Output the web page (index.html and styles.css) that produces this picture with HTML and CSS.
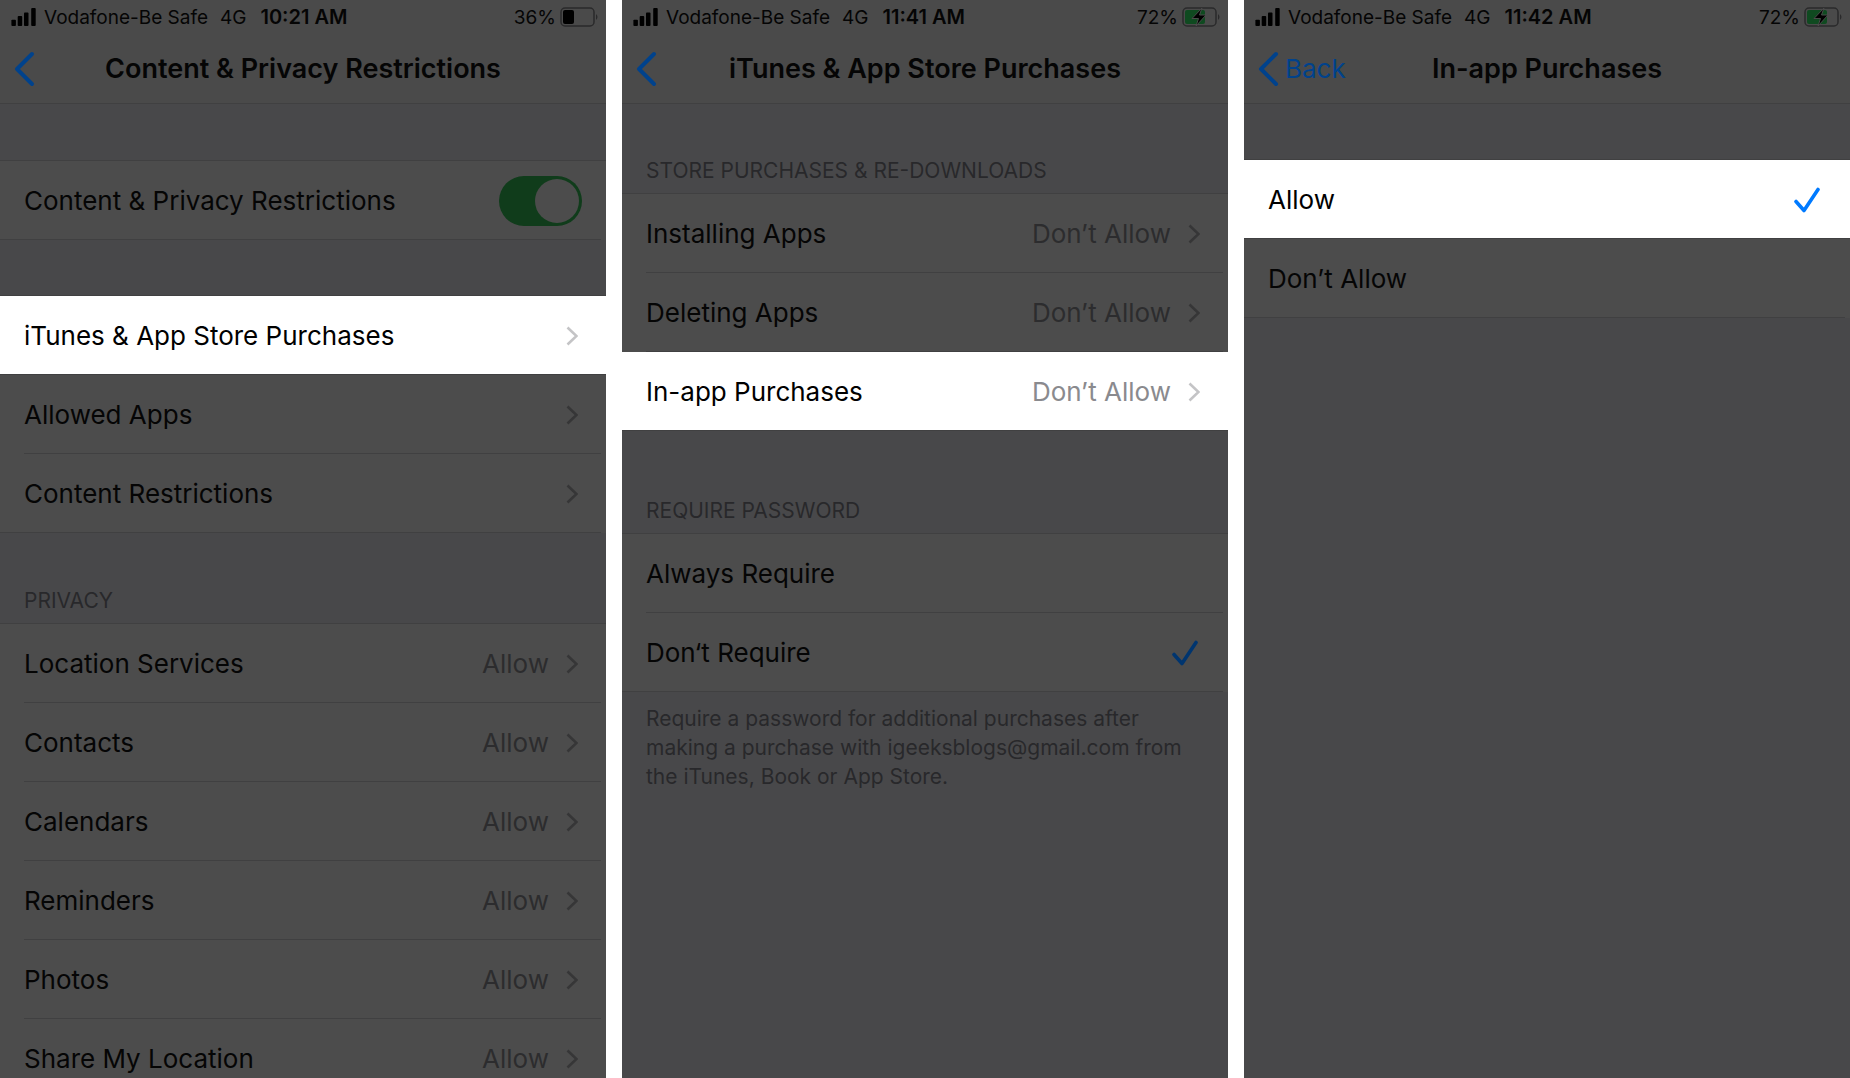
FILE: index.html
```html
<!DOCTYPE html>
<html lang="en">
<head>
<meta charset="utf-8">
<title>Content &amp; Privacy Restrictions</title>
<link rel="stylesheet" href="styles.css">
</head>
<body>
<svg class="defs" aria-hidden="true">
  <symbol id="signal" viewBox="0 0 28 20"><rect x="0" y="13" width="5" height="7" rx="1"/><rect x="7" y="9" width="5" height="11" rx="1"/><rect x="14" y="5" width="5" height="15" rx="1"/><rect x="22" y="0" width="5" height="20" rx="1"/></symbol>
  <symbol id="back" viewBox="0 0 22 36"><path d="M19 3 4 18l15 15" fill="none" stroke="currentColor" stroke-width="4" stroke-linecap="round" stroke-linejoin="round"/></symbol>
  <symbol id="chevron" viewBox="0 0 12 20"><path d="M1.500 1.500 10.500 10l-9 8.500" fill="none" stroke="currentColor" stroke-width="2.600"/></symbol>
  <symbol id="check" viewBox="0 0 26 26"><path d="M2 14.500 10 23.500 24 2.500" fill="none" stroke="currentColor" stroke-width="3.600" stroke-linecap="round" stroke-linejoin="round"/></symbol>
  <symbol id="battery" viewBox="0 0 40 20"><rect x="1" y="1" width="33" height="18" rx="4" fill="none" stroke="#2a2a2b" stroke-width="1.500"/><path d="M36 7q3 3 0 6z" fill="#2a2a2b"/></symbol>
  <symbol id="charge" viewBox="0 0 40 20"><rect x="3" y="3" width="20" height="14" rx="2" fill="#0f4a20"/><path d="M20 1 10 11.500h6.500L14 19l10-11h-6.500z" fill="#000" stroke="#4a4a4a"/></symbol>
</svg>
<main class="screens">
  <section class="phone">
    <header class="top">
      <div class="status"><svg class="signal"><use href="#signal"/></svg><span>Vodafone-Be Safe</span><span class="net">4G</span><b>10:21 AM</b><span class="level">36%</span>
        <svg class="battery" viewBox="0 0 40 20"><use href="#battery"/><rect x="3" y="3" width="11" height="14" rx="2" fill="#000"/></svg></div>
      <nav class="nav"><a class="back" href="#" aria-label="Back"><svg><use href="#back"/></svg></a><h1>Content &amp; Privacy Restrictions</h1></nav>
    </header>
    <div class="group lead"><label class="row"><span>Content &amp; Privacy Restrictions</span><input class="switch" type="checkbox" checked></label></div>
    <div class="group spaced">
      <a class="row lit" href="#"><span>iTunes &amp; App Store Purchases</span><svg class="chevron"><use href="#chevron"/></svg></a>
      <a class="row" href="#"><span>Allowed Apps</span><svg class="chevron"><use href="#chevron"/></svg></a>
      <a class="row" href="#"><span>Content Restrictions</span><svg class="chevron"><use href="#chevron"/></svg></a>
    </div>
    <h2>Privacy</h2>
    <div class="group">
      <a class="row" href="#"><span>Location Services</span><span class="value">Allow</span><svg class="chevron"><use href="#chevron"/></svg></a>
      <a class="row" href="#"><span>Contacts</span><span class="value">Allow</span><svg class="chevron"><use href="#chevron"/></svg></a>
      <a class="row" href="#"><span>Calendars</span><span class="value">Allow</span><svg class="chevron"><use href="#chevron"/></svg></a>
      <a class="row" href="#"><span>Reminders</span><span class="value">Allow</span><svg class="chevron"><use href="#chevron"/></svg></a>
      <a class="row" href="#"><span>Photos</span><span class="value">Allow</span><svg class="chevron"><use href="#chevron"/></svg></a>
      <a class="row" href="#"><span>Share My Location</span><span class="value">Allow</span><svg class="chevron"><use href="#chevron"/></svg></a>
    </div>
  </section>

  <section class="phone">
    <header class="top">
      <div class="status"><svg class="signal"><use href="#signal"/></svg><span>Vodafone-Be Safe</span><span class="net">4G</span><b>11:41 AM</b><span class="level">72%</span>
        <svg class="battery" viewBox="0 0 40 20"><use href="#battery"/><use href="#charge"/></svg></div>
      <nav class="nav"><a class="back" href="#" aria-label="Back"><svg><use href="#back"/></svg></a><h1>iTunes &amp; App Store Purchases</h1></nav>
    </header>
    <h2>Store Purchases &amp; Re-downloads</h2>
    <div class="group">
      <a class="row" href="#"><span>Installing Apps</span><span class="value">Don’t Allow</span><svg class="chevron"><use href="#chevron"/></svg></a>
      <a class="row" href="#"><span>Deleting Apps</span><span class="value">Don’t Allow</span><svg class="chevron"><use href="#chevron"/></svg></a>
      <a class="row lit" href="#"><span>In-app Purchases</span><span class="value">Don’t Allow</span><svg class="chevron"><use href="#chevron"/></svg></a>
    </div>
    <h2 class="far">Require Password</h2>
    <div class="group">
      <button class="row" type="button"><span>Always Require</span></button>
      <button class="row" type="button"><span>Don‘t Require</span><svg class="check"><use href="#check"/></svg></button>
    </div>
    <p class="note">Require a password for additional purchases after making a purchase with igeeksblogs@gmail.com from the iTunes, Book or App Store.</p>
  </section>

  <section class="phone">
    <header class="top">
      <div class="status"><svg class="signal"><use href="#signal"/></svg><span>Vodafone-Be Safe</span><span class="net">4G</span><b>11:42 AM</b><span class="level">72%</span>
        <svg class="battery" viewBox="0 0 40 20"><use href="#battery"/><use href="#charge"/></svg></div>
      <nav class="nav"><a class="back" href="#"><svg><use href="#back"/></svg>Back</a><h1>In-app Purchases</h1></nav>
    </header>
    <div class="group spaced">
      <button class="row lit" type="button"><span>Allow</span><svg class="check"><use href="#check"/></svg></button>
      <button class="row" type="button"><span>Don’t Allow</span></button>
    </div>
  </section>
</main>
</body>
</html>
```
FILE: styles.css
```css
* { box-sizing: border-box; }

body {
  margin: 0;
  background: #fff;
  color: #050505;
  font-family: Inter, "Liberation Sans", sans-serif;
  font-size: 26px;
}

a { color: inherit; text-decoration: none; }
.defs { display: none; }

.screens {
  display: grid;
  grid-template-columns: repeat(3, 1fr);
  gap: 16px;
  height: 100vh;
  overflow: hidden;
}

.phone { background: #48484a; overflow: hidden; }

.top {
  height: 104px;
  background: #4a4a4a;
  border-bottom: 1px solid #404041;
}

.status {
  display: flex;
  align-items: center;
  height: 34px;
  padding: 0 6px 0 10px;
  font-size: 19px;
}
.signal { width: 28px; height: 18px; margin-right: 6px; }
.net { margin: 0 14px 0 12px; }
.status b { font-size: 20px; font-weight: 600; }
.level { margin-left: auto; margin-right: 4px; }
.battery { width: 40px; height: 20px; }

.nav {
  display: grid;
  grid-template-columns: 1fr auto 1fr;
  align-items: center;
  height: 69px;
  padding: 0 13px;
}
.back { display: flex; align-items: center; gap: 6px; color: #00428c; }
.back svg { width: 22px; height: 36px; }
h1 { margin: 0; font-size: 27px; font-weight: 600; }

h2 {
  display: flex;
  align-items: flex-end;
  height: 89px;
  margin: 0;
  padding: 0 24px 10px;
  color: #28282b;
  font-size: 21px;
  font-weight: 400;
  line-height: 24px;
  text-transform: uppercase;
}
.group + h2 { height: 90px; }
.group + .far { height: 102px; }

.group { background: #4c4c4c; border-top: 1px solid #404041; }
.lead { margin-top: 56px; }
.spaced { margin-top: 55px; }

.row {
  display: flex;
  align-items: center;
  position: relative;
  width: 100%;
  height: 79px;
  padding: 0 24px;
  border: 0;
  background: none;
  color: inherit;
  font: inherit;
  text-align: left;
}
.row::after {
  content: "";
  position: absolute;
  right: 5px;
  bottom: 0;
  left: 24px;
  border-bottom: 1px solid #404041;
}
.row:last-child::after { left: 0; }
.row > :first-child { margin-right: auto; }

.lit { background: #fff; color: #000; }
.lit::after { right: 0; left: 0; }

.value { margin-right: 17px; color: #2c2c2e; }
.chevron { width: 12px; height: 20px; margin-right: 4px; color: #363637; }
.check { width: 26px; height: 26px; margin-right: 6px; color: #00356f; }
.lit .value { color: #8a8a8e; }
.lit .chevron { color: #c4c4c6; }
.lit .check { color: #007aff; }

.switch {
  appearance: none;
  display: flex;
  width: 83px;
  height: 50px;
  margin: 0;
  padding: 3px;
  border-radius: 25px;
  background: #103c1b;
}
.switch::before {
  content: "";
  width: 44px;
  height: 44px;
  margin-left: auto;
  border-radius: 50%;
  background: #4c4c4c;
}

.note {
  margin: 0;
  padding: 12px 30px 12px 24px;
  color: #28282b;
  font-size: 21px;
  line-height: 29px;
}
```
